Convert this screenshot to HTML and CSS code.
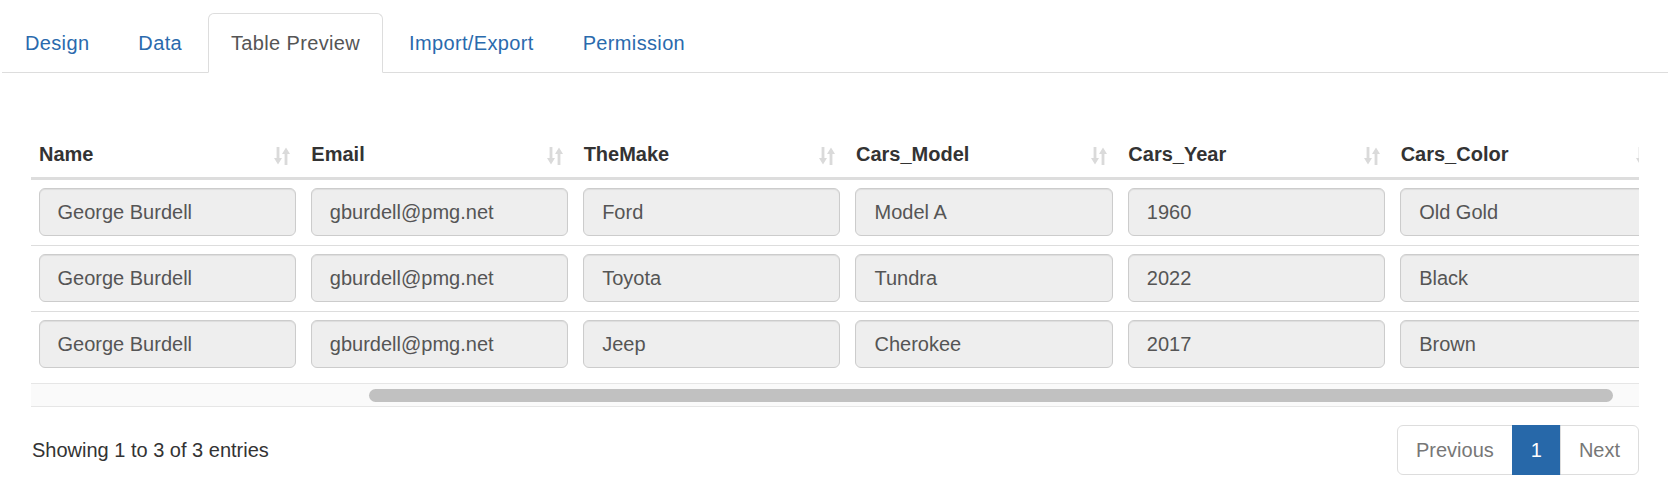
FILE: index.html
```html
<!DOCTYPE html>
<html lang="en">

<head>
    <meta charset="UTF-8" />
    <meta name="viewport" content="width=device-width, initial-scale=1.0" />
    <title>Table Preview</title>
    <link rel="stylesheet" href="styles.css">
</head>

<body>
    <ul class="nav-tabs">
        <li><a href="#">Design</a></li>
        <li><a href="#">Data</a></li>
        <li class="active"><a href="#">Table Preview</a></li>
        <li><a href="#">Import/Export</a></li>
        <li><a href="#">Permission</a></li>
    </ul>

    <div class="tab-pane">
        <div class="dt-wrapper">
            <div class="dt-scroll">
                <table class="dt-table">
                    <colgroup>
                        <col><col><col><col><col><col>
                    </colgroup>
                    <thead>
                        <tr>
                            <th><div class="th-inner"><span>Name</span><svg class="sort-icon" viewBox="0 0 16 18"><path d="M2.6 0h2.8v11h2.6L4 17.5 0 11h2.6z M10.6 18h2.8V7h2.6L12 0.5 8 7h2.6z"/></svg></div></th>
                            <th><div class="th-inner"><span>Email</span><svg class="sort-icon" viewBox="0 0 16 18"><path d="M2.6 0h2.8v11h2.6L4 17.5 0 11h2.6z M10.6 18h2.8V7h2.6L12 0.5 8 7h2.6z"/></svg></div></th>
                            <th><div class="th-inner"><span>TheMake</span><svg class="sort-icon" viewBox="0 0 16 18"><path d="M2.6 0h2.8v11h2.6L4 17.5 0 11h2.6z M10.6 18h2.8V7h2.6L12 0.5 8 7h2.6z"/></svg></div></th>
                            <th><div class="th-inner"><span>Cars_Model</span><svg class="sort-icon" viewBox="0 0 16 18"><path d="M2.6 0h2.8v11h2.6L4 17.5 0 11h2.6z M10.6 18h2.8V7h2.6L12 0.5 8 7h2.6z"/></svg></div></th>
                            <th><div class="th-inner"><span>Cars_Year</span><svg class="sort-icon" viewBox="0 0 16 18"><path d="M2.6 0h2.8v11h2.6L4 17.5 0 11h2.6z M10.6 18h2.8V7h2.6L12 0.5 8 7h2.6z"/></svg></div></th>
                            <th><div class="th-inner"><span>Cars_Color</span><svg class="sort-icon" viewBox="0 0 16 18"><path d="M2.6 0h2.8v11h2.6L4 17.5 0 11h2.6z M10.6 18h2.8V7h2.6L12 0.5 8 7h2.6z"/></svg></div></th>
                        </tr>
                    </thead>
                    <tbody>
                        <tr>
                            <td><input class="cell-input" value="George Burdell" readonly></td>
                            <td><input class="cell-input" value="gburdell@pmg.net" readonly></td>
                            <td><input class="cell-input" value="Ford" readonly></td>
                            <td><input class="cell-input" value="Model A" readonly></td>
                            <td><input class="cell-input" value="1960" readonly></td>
                            <td><input class="cell-input" value="Old Gold" readonly></td>
                        </tr>
                        <tr>
                            <td><input class="cell-input" value="George Burdell" readonly></td>
                            <td><input class="cell-input" value="gburdell@pmg.net" readonly></td>
                            <td><input class="cell-input" value="Toyota" readonly></td>
                            <td><input class="cell-input" value="Tundra" readonly></td>
                            <td><input class="cell-input" value="2022" readonly></td>
                            <td><input class="cell-input" value="Black" readonly></td>
                        </tr>
                        <tr>
                            <td><input class="cell-input" value="George Burdell" readonly></td>
                            <td><input class="cell-input" value="gburdell@pmg.net" readonly></td>
                            <td><input class="cell-input" value="Jeep" readonly></td>
                            <td><input class="cell-input" value="Cherokee" readonly></td>
                            <td><input class="cell-input" value="2017" readonly></td>
                            <td><input class="cell-input" value="Brown" readonly></td>
                        </tr>
                    </tbody>
                </table>
            </div>

            <div class="dt-scrollbar">
                <div class="dt-thumb"></div>
            </div>

            <div class="dt-footer">
                <div class="dt-info">Showing 1 to 3 of 3 entries</div>
                <ul class="pagination">
                    <li class="disabled"><a href="#">Previous</a></li>
                    <li class="active"><a href="#">1</a></li>
                    <li class="disabled"><a href="#">Next</a></li>
                </ul>
            </div>
        </div>
    </div>
</body>

</html>
```

FILE: styles.css
```css
body {
    margin: 0;
    font-family: "Liberation Sans", Arial, sans-serif;
    font-size: 20px;
    line-height: 28px;
    color: #333;
    background-color: white;
}

a {
    text-decoration: none;
}

/* Tabs */
.nav-tabs {
    display: flex;
    list-style: none;
    margin: 13px 0 0 2px;
    padding: 0;
    border-bottom: 1px solid #ddd;
}

.nav-tabs li {
    margin-right: 3px;
    margin-bottom: -1px;
}

.nav-tabs a {
    display: block;
    padding: 15px 22px;
    border: 1px solid transparent;
    border-radius: 6px 6px 0 0;
    color: #2a6aad;
    letter-spacing: 0.35px;
}

.nav-tabs li.active a {
    color: #555;
    background-color: white;
    border-color: #ddd;
    border-bottom-color: transparent;
}

/* Table */
.tab-pane {
    padding: 56px 29px 0 31px;
}

.dt-scroll {
    overflow: hidden;
    padding-bottom: 6px;
}

.dt-table {
    table-layout: fixed;
    width: 1634px;
    border-collapse: collapse;
}

.dt-table col {
    width: 272.3px;
}

.dt-table th {
    padding: 11px 13px 9px 8px;
    text-align: left;
    font-weight: bold;
    border-bottom: 3px solid #ddd;
}

.th-inner {
    display: flex;
    justify-content: space-between;
    align-items: center;
    white-space: nowrap;
}

.sort-icon {
    width: 16px;
    height: 18px;
    margin-top: 3px;
    flex-shrink: 0;
    fill: #dadada;
}

.dt-table td {
    padding: 8px 7.5px 9px 7.5px;
}

.dt-table tbody tr + tr td {
    border-top: 1px solid #ddd;
}

.cell-input {
    display: block;
    box-sizing: border-box;
    width: 100%;
    height: 48px;
    padding: 0 18px;
    border: 1px solid #ccc;
    border-radius: 6px;
    background-color: #eee;
    box-shadow: inset 0 1px 1px rgba(0, 0, 0, 0.075);
    font-family: inherit;
    font-size: 20px;
    color: #555;
    outline: none;
}

/* Horizontal scrollbar */
.dt-scrollbar {
    height: 22px;
    display: flex;
    align-items: center;
    background-color: #fafafa;
    border-top: 1px solid #e6e6e6;
    border-bottom: 1px solid #e6e6e6;
}

.dt-thumb {
    margin-left: 338px;
    width: 1244px;
    height: 13px;
    border-radius: 7px;
    background-color: #c1c1c1;
}

/* Footer */
.dt-footer {
    display: flex;
    justify-content: space-between;
    align-items: center;
    margin-top: 18px;
}

.dt-info {
    padding-left: 1px;
}

.pagination {
    display: flex;
    list-style: none;
    margin: 0;
    padding: 0;
}

.pagination a {
    display: block;
    padding: 10px 18px;
    border: 1px solid #ddd;
    margin-left: -1px;
    color: #777;
    background-color: white;
}

.pagination li:first-child a {
    margin-left: 0;
    border-radius: 6px 0 0 6px;
}

.pagination li:last-child a {
    border-radius: 0 6px 6px 0;
}

.pagination li.active a {
    color: white;
    background-color: #2768a9;
    border-color: #2768a9;
}
```
